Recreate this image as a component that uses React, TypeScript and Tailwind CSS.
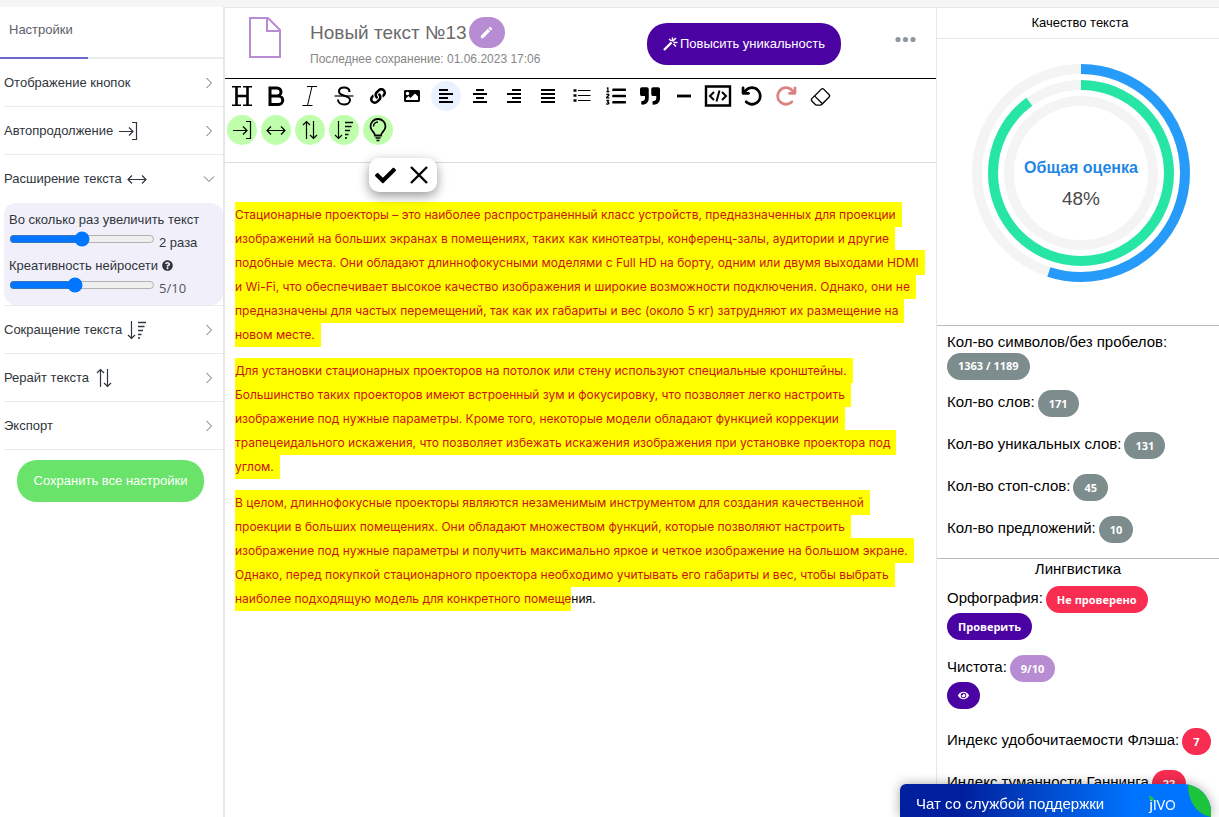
import { useState } from 'react';
import type { ReactNode } from 'react';
import { BsEraser } from 'react-icons/bs';
import { FaCheck, FaEye, FaImage, FaLink, FaListOl, FaQuestionCircle, FaQuoteRight } from 'react-icons/fa';
import { FaArrowRotateLeft, FaArrowRotateRight } from 'react-icons/fa6';
import { MdEdit } from 'react-icons/md';

interface IconProps {
  children: ReactNode;
  width?: number;
  strokeWidth?: number;
}

// 24px line icon drawn at its natural size
function Icon({ children, width = 24, strokeWidth = 1 }: IconProps) {
  return (
    <svg
      width={width}
      height="24"
      viewBox={`0 0 ${width} 24`}
      fill="none"
      stroke="currentColor"
      strokeWidth={strokeWidth}
      className="shrink-0"
      aria-hidden="true"
    >
      {children}
    </svg>
  );
}

const ContinueIcon = () => (
  <Icon strokeWidth={1.2}>
    <path d="M3 12.5h14M13 8.5l4 4-4 4M16 3.5h4.5v17H16" />
  </Icon>
);

const ExpandIcon = () => (
  <Icon strokeWidth={1.2}>
    <path d="M3 12.5h18M7 8.5l-4 4 4 4M17 8.5l4 4-4 4" />
  </Icon>
);

const RewriteIcon = () => (
  <Icon strokeWidth={1.2}>
    <path d="M8.5 21V3.5M5 7l3.5-3.5L12 7M15.5 3v17.5M12 17l3.5 3.5L19 17" />
  </Icon>
);

const ShortenIcon = () => (
  <Icon strokeWidth={1.2}>
    <path d="M6.5 3v17.5M3 17l3.5 3.5L10 17" />
    <path d="M13 4.5h8M13 8.5h6.5M13 12.5h5M13 16.5h3.5M13 20h2" strokeWidth={1.4} />
  </Icon>
);

const BulbIcon = () => (
  <Icon strokeWidth={1.8}>
    <path d="M9 17.5c0-3.5-4.5-4.5-4.5-9a7.5 7.5 0 0 1 15 0c0 4.5-4.5 5.5-4.5 9z" />
    <path d="M9.5 20h5M10.5 22.5h3M7.5 8.5A4.5 4.5 0 0 1 12 4" strokeWidth={1.5} />
  </Icon>
);

const HeadingIcon = () => (
  <Icon strokeWidth={2.6}>
    <path d="M6.5 2.5v19M17.5 2.5v19M6.5 12h11" />
    <path d="M2 2.8h9M13 2.8h9M2 21.2h9M13 21.2h9" strokeWidth={1.6} />
  </Icon>
);

const BoldIcon = () => (
  <Icon strokeWidth={3}>
    <path d="M6 4h7a4 4 0 0 1 0 8H6zM6 12h8.5a4 4 0 0 1 0 8.5H6z" />
  </Icon>
);

const ItalicIcon = () => (
  <Icon>
    <path d="M9 2.5h10M4.5 21.5h10M14 2.5l-4.5 19" />
  </Icon>
);

const StrikeIcon = () => (
  <Icon strokeWidth={2}>
    <path d="M17.5 8c0-3-2.5-4.5-5.5-4.5S7 5 7 7.5c0 5.5 11 3 11 8.5 0 3-3 4.5-6 4.5s-6-1.5-6-5" />
    <path d="M2.5 12h19" strokeWidth={1.2} />
  </Icon>
);

const BulletListIcon = () => (
  <Icon>
    <path d="M8 6.5h12.5M8 11.5h12.5M8 16.5h12.5" />
    <path d="M3.5 6.5h3M3.5 11.5h3M3.5 16.5h3" strokeWidth={2.6} />
  </Icon>
);

const MinusIcon = () => (
  <Icon strokeWidth={2.8}>
    <path d="M5 12h14" />
  </Icon>
);

const CodeIcon = () => (
  <Icon width={28} strokeWidth={2}>
    <path d="M2 2.5h24v19H2z" strokeWidth={2.4} />
    <path d="M10 8l-4 4 4 4M18 8l4 4-4 4M15.5 6.5l-3 11" />
  </Icon>
);

const CrossIcon = () => (
  <Icon strokeWidth={2.4}>
    <path d="M4 4l16 16M20 4L4 20" />
  </Icon>
);

function AlignIcon({ d }: { d: string }) {
  return (
    <Icon strokeWidth={2}>
      <path d={d} />
    </Icon>
  );
}

const TOOLS = [
  { label: 'Заголовок', icon: <HeadingIcon /> },
  { label: 'Жирный', icon: <BoldIcon /> },
  { label: 'Курсив', icon: <ItalicIcon /> },
  { label: 'Зачеркнутый', icon: <StrikeIcon /> },
  { label: 'Ссылка', icon: <FaLink size={16} /> },
  { label: 'Изображение', icon: <FaImage size={16} /> },
  { label: 'По левому краю', icon: <AlignIcon d="M5 6h9M5 10h14M5 14h9M5 18h14" />, active: true },
  { label: 'По центру', icon: <AlignIcon d="M8 6h8M5 10h14M8 14h8M5 18h14" /> },
  { label: 'По правому краю', icon: <AlignIcon d="M10 6h9M5 10h14M10 14h9M5 18h14" /> },
  { label: 'По ширине', icon: <AlignIcon d="M5 6h14M5 10h14M5 14h14M5 18h14" /> },
  { label: 'Список', icon: <BulletListIcon /> },
  { label: 'Нумерованный список', icon: <FaListOl size={20} /> },
  { label: 'Цитата', icon: <FaQuoteRight size={20} /> },
  { label: 'Линия', icon: <MinusIcon /> },
  { label: 'Код', icon: <CodeIcon /> },
  { label: 'Отменить', icon: <FaArrowRotateLeft size={22} /> },
  { label: 'Повторить', icon: <FaArrowRotateRight size={22} className="text-[#dc8280]" /> },
  { label: 'Очистить', icon: <BsEraser size={21} /> },
];

const AI_TOOLS = [
  { label: 'Автопродолжение', icon: <ContinueIcon /> },
  { label: 'Расширение текста', icon: <ExpandIcon /> },
  { label: 'Рерайт текста', icon: <RewriteIcon /> },
  { label: 'Сокращение текста', icon: <ShortenIcon /> },
  { label: 'Идея', icon: <BulbIcon /> },
];

const PARAGRAPHS = [
  'Стационарные проекторы – это наиболее распространенный класс устройств, предназначенных для проекции изображений на больших экранах в помещениях, таких как кинотеатры, конференц-залы, аудитории и другие подобные места. Они обладают длиннофокусными моделями с Full HD на борту, одним или двумя выходами HDMI и Wi-Fi, что обеспечивает высокое качество изображения и широкие возможности подключения. Однако, они не предназначены для частых перемещений, так как их габариты и вес (около 5 кг) затрудняют их размещение на новом месте.',
  'Для установки стационарных проекторов на потолок или стену используют специальные кронштейны. Большинство таких проекторов имеют встроенный зум и фокусировку, что позволяет легко настроить изображение под нужные параметры. Кроме того, некоторые модели обладают функцией коррекции трапецеидального искажения, что позволяет избежать искажения изображения при установке проектора под углом.',
];

const LAST_PARAGRAPH =
  'В целом, длиннофокусные проекторы являются незаменимым инструментом для создания качественной проекции в больших помещениях. Они обладают множеством функций, которые позволяют настроить изображение под нужные параметры и получить максимально яркое и четкое изображение на большом экране. Однако, перед покупкой стационарного проектора необходимо учитывать его габариты и вес, чтобы выбрать';

function Chevron({ open = false }: { open?: boolean }) {
  return (
    <svg width="12" height="12" viewBox="0 0 12 12" fill="none" stroke="#6b6b6b" aria-hidden="true">
      <path d={open ? 'M1 3.5l5 5 5-5' : 'M3.5 1l5 5-5 5'} />
    </svg>
  );
}

function SettingsRow({ title, icon, open = false }: { title: string; icon?: ReactNode; open?: boolean }) {
  return (
    <button
      className={`flex h-12 w-full items-center gap-[3px] pr-2 text-left text-[13px] text-[#2f353b] ${open ? '' : 'border-b border-[#e9e9ee]'}`}
    >
      <span>{title}</span>
      {icon}
      <span className="ml-auto">
        <Chevron open={open} />
      </span>
    </button>
  );
}

function Sidebar() {
  const [times, setTimes] = useState(2);
  const [creativity, setCreativity] = useState(5);

  return (
    <aside className="w-[225px] shrink-0 border-r-2 border-[#e6e6e9]">
      <div className="flex h-[52px] border-b-2 border-[#ececee] text-[13px]">
        <button className="-mb-0.5 w-[88px] border-b-2 border-[#6a68cf] pb-1 pl-[9px] text-left text-[#5b6168]">
          Настройки
        </button>
      </div>

      <div className="pl-1">
        <SettingsRow title="Отображение кнопок" />
        <SettingsRow title="Автопродолжение" icon={<ContinueIcon />} />
        <SettingsRow title="Расширение текста" icon={<ExpandIcon />} open />
        <div className="border-b border-[#e9e9ee]">
          <div className="rounded-xl bg-[#f1f0fa] px-[5px] py-[5px] text-[13px] leading-[23px] text-[#2f353b]">
            <label htmlFor="times" className="block">
              Во сколько раз увеличить текст
            </label>
            <div className="flex gap-1">
              <input
                id="times"
                type="range"
                min="1"
                max="3"
                value={times}
                onChange={(e) => setTimes(Number(e.target.value))}
                className="h-4 w-[146px]"
              />
              <span>{times} раза</span>
            </div>
            <label htmlFor="creativity" className="flex items-center gap-1">
              Креативность нейросети <FaQuestionCircle size={11} />
            </label>
            <div className="flex gap-1">
              <input
                id="creativity"
                type="range"
                min="1"
                max="10"
                value={creativity}
                onChange={(e) => setCreativity(Number(e.target.value))}
                className="h-4 w-[146px]"
              />
              <span className="font-['Open_Sans'] text-[#50565c]">{creativity}/10</span>
            </div>
          </div>
        </div>
        <SettingsRow title="Сокращение текста" icon={<ShortenIcon />} />
        <SettingsRow title="Рерайт текста" icon={<RewriteIcon />} />
        <SettingsRow title="Экспорт" />
      </div>

      <div className="pt-2.5 pr-[19px] pl-[17px]">
        <button className="h-[42px] w-full rounded-[20px] bg-[#69e369] text-[13px] text-white">
          Сохранить все настройки
        </button>
      </div>
    </aside>
  );
}

function EditorHeader() {
  return (
    <header className="flex h-[71px] items-start border-b border-black pr-5 pl-6">
      <svg width="32" height="41" viewBox="0 0 32 41" fill="none" stroke="#b78cd3" strokeWidth="2" className="mt-[9px]" aria-hidden="true">
        <path d="M1 1h18l12 12v27H1z" />
        <path d="M18 1v13h13" />
      </svg>
      <div className="ml-[29px] flex-1 pt-[9px]">
        <div className="flex items-center gap-0.5">
          <h1 className="text-[19px] leading-[30px] text-[#6a6a6a]">Новый текст №13</h1>
          <button aria-label="Переименовать" className="flex h-[31px] w-9 items-center justify-center rounded-full bg-[#b78cd3] text-white">
            <MdEdit size={15} />
          </button>
        </div>
        <p className="text-xs leading-[22px] text-[#868686]">Последнее сохранение: 01.06.2023 17:06</p>
      </div>
      <button className="mt-[15px] flex h-[42px] items-center gap-0.5 rounded-[20px] bg-[#4b02a3] px-4 text-[13px] text-white">
        <svg width="15" height="14" viewBox="0 0 15 14" fill="none" stroke="currentColor" strokeWidth="1.5" aria-hidden="true">
          <path d="M1 13l7.5-7.5" strokeWidth="2.4" />
          <path d="M9.5 0.5v4M6 2l2.5 2M13 1l-3 3M10.5 5.5h4M10.5 7l2.5 2.5" />
        </svg>
        Повысить уникальность
      </button>
      <button aria-label="Ещё" className="mt-7 ml-[54px]">
        <svg width="21" height="7" viewBox="0 0 21 7" fill="#8e969f" aria-hidden="true">
          <circle cx="3" cy="3.5" r="2.6" />
          <circle cx="10.5" cy="3.5" r="2.6" />
          <circle cx="18" cy="3.5" r="2.6" />
        </svg>
      </button>
    </header>
  );
}

const MARK = 'bg-[#ff0] py-[5px] text-[#cc1414]';

function Editor() {
  return (
    <main className="min-w-0 flex-1 border-t border-[#e6e6e9]">
      <EditorHeader />
      <div className="relative h-[84px] border-b border-[#dcdcdc] pt-0.5 pl-0.5 text-black">
        <div className="flex flex-wrap gap-1">
          {TOOLS.map((tool) => (
            <button
              key={tool.label}
              aria-label={tool.label}
              className={`flex size-[30px] items-center justify-center rounded-full ${tool.active ? 'bg-[#eaf2ff]' : ''}`}
            >
              {tool.icon}
            </button>
          ))}
        </div>
        <div className="mt-1 flex gap-1">
          {AI_TOOLS.map((tool) => (
            <button key={tool.label} aria-label={tool.label} className="flex size-[30px] items-center justify-center rounded-full bg-[#bfffab]">
              {tool.icon}
            </button>
          ))}
        </div>
        <div className="absolute top-[79px] left-36 flex h-[34px] w-[68px] items-center justify-around rounded-[10px] bg-white shadow-[0_4px_12px_rgba(0,0,0,0.4)]">
          <button aria-label="Принять">
            <FaCheck size={21} />
          </button>
          <button aria-label="Отклонить">
            <CrossIcon />
          </button>
        </div>
      </div>

      <article className="space-y-3 pt-10 pr-3.5 pl-2.5 font-[Inter] text-xs leading-6 text-black">
        {PARAGRAPHS.map((text) => (
          <p key={text}>
            <mark className={`${MARK} box-decoration-clone pr-1.5`}>{text}</mark>
          </p>
        ))}
        <p>
          <mark className={`${MARK} box-decoration-clone pr-1.5`}>{LAST_PARAGRAPH}</mark>{' '}
          <mark className={MARK}>наиболее подходящую модель для конкретного помеще</mark>ния.
        </p>
      </article>
    </main>
  );
}

const BADGE =
  "inline-flex h-[27px] items-center rounded-full px-[11px] font-['Open_Sans'] text-[11px] font-bold text-white";

function ScoreChart() {
  // rings from the outside in
  const rings = [
    { r: 104, color: '#279bfa', share: 55 },
    { r: 88, color: '#27e6a5', share: 90 },
    { r: 72, color: '#f4f4f4', share: 0 },
  ];

  return (
    <svg viewBox="0 0 220 220" width="220" height="220" className="mx-auto" role="img">
      {rings.map((ring) => (
        <g key={ring.r} fill="none" strokeWidth="10" transform="rotate(-90 110 110)">
          <circle cx="110" cy="110" r={ring.r} stroke="#f4f4f4" />
          {ring.share > 0 && (
            <circle cx="110" cy="110" r={ring.r} stroke={ring.color} pathLength="100" strokeDasharray={`${ring.share} 100`} />
          )}
        </g>
      ))}
      <text x="110" y="110" textAnchor="middle" fontSize="16" fontWeight="bold" fill="#1f87e5">
        Общая оценка
      </text>
      <text x="110" y="142" textAnchor="middle" fontSize="19" fill="#4a4a4a">
        48%
      </text>
    </svg>
  );
}

const STATS = [
  { label: 'Кол-во слов:', value: '171' },
  { label: 'Кол-во уникальных слов:', value: '131' },
  { label: 'Кол-во стоп-слов:', value: '45' },
  { label: 'Кол-во предложений:', value: '10' },
];

function QualityPanel() {
  return (
    <aside className="w-[283px] shrink-0 border-t border-l border-[#e6e6e9] text-[15px] text-black">
      <h2 className="h-[31px] border-b border-[#e6e6e9] pl-1 text-center text-[13px] leading-[30px]">Качество текста</h2>
      <div className="h-[287px] border-b border-[#bbb] pt-6 pl-1.5">
        <ScoreChart />
      </div>

      <div className="border-b border-[#bbb] px-2.5 pt-[5px] pb-[15px]">
        <div className="leading-[22px]">Кол-во символов/без пробелов:</div>
        <span className={`${BADGE} bg-[#7d8c8c]`}>1363 / 1189</span>
        <div className="mt-2.5 flex flex-col gap-[15px]">
          {STATS.map((stat) => (
            <div key={stat.label} className="flex gap-[3px] leading-6">
              {stat.label}
              <span className={`${BADGE} bg-[#7d8c8c]`}>{stat.value}</span>
            </div>
          ))}
        </div>
      </div>

      <h2 className="pb-[7px] text-center leading-5">Лингвистика</h2>
      <div className="flex flex-col gap-[15px] px-2.5 leading-6">
        <div>
          <div className="flex gap-[3px]">
            Орфография: <span className={`${BADGE} bg-[#f82d51]`}>Не проверено</span>
          </div>
          <button className={`${BADGE} bg-[#4b02a3]`}>Проверить</button>
        </div>
        <div>
          <div className="flex gap-[3px]">
            Чистота: <span className={`${BADGE} bg-[#b78cd3]`}>9/10</span>
          </div>
          <button aria-label="Показать" className={`${BADGE} bg-[#4b02a3]`}>
            <FaEye size={11} />
          </button>
        </div>
        <div className="mt-1 flex gap-[3px] whitespace-nowrap">
          Индекс удобочитаемости Флэша: <span className={`${BADGE} bg-[#f82d51]`}>7</span>
        </div>
        <div className="flex gap-[3px] whitespace-nowrap">
          Индекс туманности Ганнинга <span className={`${BADGE} bg-[#f82d51]`}>22</span>
        </div>
      </div>
    </aside>
  );
}

function ChatWidget() {
  return (
    <button className="fixed right-2 bottom-0 flex h-[33px] w-[311px] items-center overflow-hidden rounded-tl-md rounded-tr-[28px] bg-linear-to-r from-[#001f9e] from-20% to-[#0074ff] to-75% pt-2 pl-4 text-[15px] text-white shadow-[0_0_12px_rgba(0,0,0,0.35)]">
      Чат со службой поддержки
      <span className="relative ml-[45px] flex items-baseline font-[Lato] text-base leading-5">
        j<span className="text-[13px]">IVO</span>
        <svg width="5" height="5" viewBox="0 0 5 5" className="absolute top-0.5 left-0" aria-hidden="true">
          <path d="M0 0c3 0 5 2 5 5C2 5 0 3 0 0z" fill="#1cc43c" />
        </svg>
      </span>
      <svg width="23" height="33" viewBox="0 0 23 33" className="absolute top-0 right-0" aria-hidden="true">
        <path d="M0 0h23v33C8 30 0 17 0 0z" fill="#1cc43c" />
      </svg>
    </button>
  );
}

export default function App() {
  return (
    <div className="flex h-screen flex-col overflow-hidden bg-white font-['Liberation_Sans',sans-serif]">
      <div className="h-[7px] shrink-0 bg-[#f5f5f5]"></div>
      <div className="flex min-h-0 flex-1">
        <Sidebar />
        <Editor />
        <QualityPanel />
      </div>
      <ChatWidget />
    </div>
  );
}
